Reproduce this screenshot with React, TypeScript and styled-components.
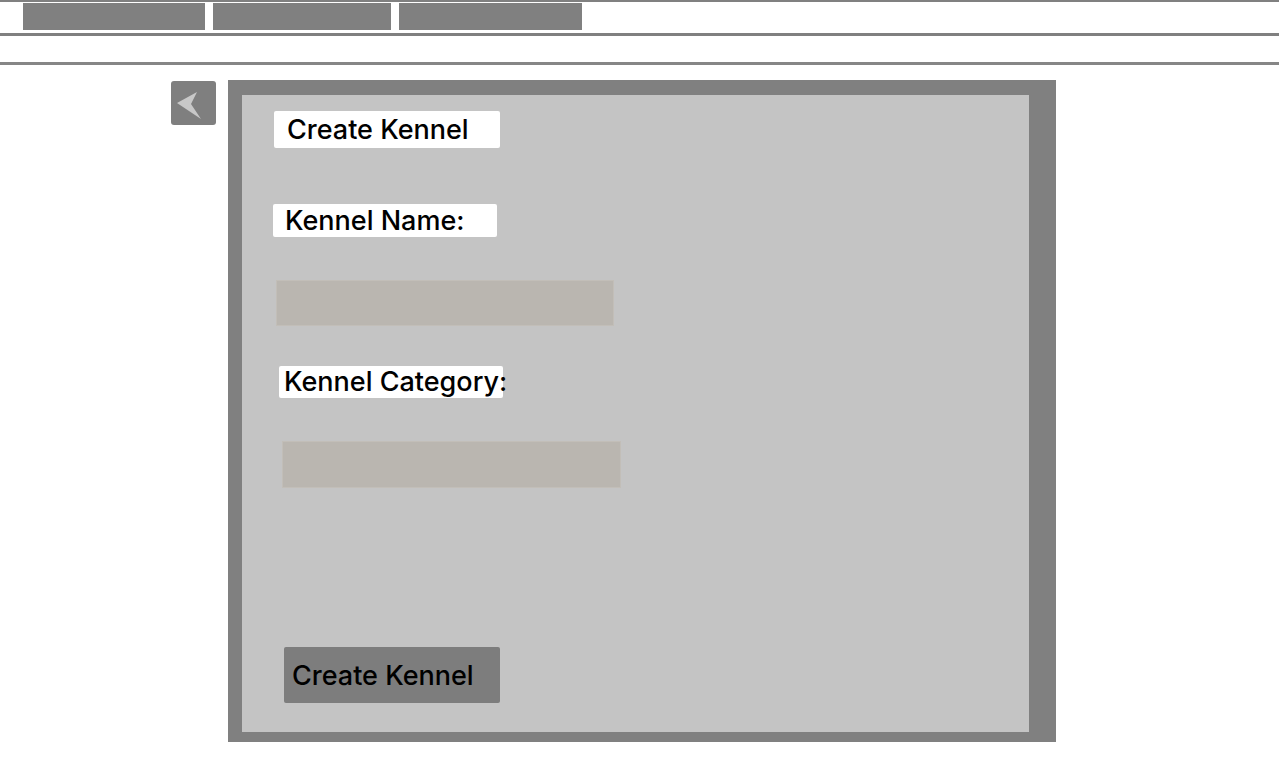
import React from 'react';
import styled, { createGlobalStyle } from 'styled-components';

const GlobalStyle = createGlobalStyle`
  html, body {
    margin: 0;
    padding: 0;
    background: #ffffff;
    font-family: Inter, "Liberation Sans", Arial, sans-serif;
  }
`;

const Header = styled.header`
  border-top: 2px solid #808080;
`;

const Tabs = styled.nav`
  display: flex;
  gap: 8px;
  padding: 1px 0 3px 23px;
  border-bottom: 3px solid #808080;
`;

const Tab = styled.div<{ w: number }>`
  width: ${(p) => p.w}px;
  height: 27px;
  background: #808080;
`;

const SubBar = styled.div`
  height: 26px;
  border-bottom: 3px solid #868686;
`;

const Main = styled.main`
  display: flex;
  align-items: flex-start;
  gap: 12px;
  padding: 15px 0 0 171px;
`;

const BackButton = styled.button`
  width: 45px;
  height: 44px;
  margin-top: 1px;
  border: none;
  border-radius: 3px;
  background: #7f7f7f;
  display: block;
  padding: 0;
  cursor: pointer;
`;

const Panel = styled.section`
  width: 828px;
  height: 662px;
  box-sizing: border-box;
  border-style: solid;
  border-color: #808080;
  border-width: 15px 27px 10px 14px;
  background: #c4c4c4;
  display: flex;
  flex-direction: column;
  align-items: flex-start;
  padding: 16px 0 0 0;
`;

const Label = styled.div<{ x: number; w: number; h: number; top: number; pad: number }>`
  margin-top: ${(p) => p.top}px;
  margin-left: ${(p) => p.x}px;
  width: ${(p) => p.w}px;
  height: ${(p) => p.h}px;
  box-sizing: border-box;
  background: #ffffff;
  border-radius: 2px;
  color: #000;
  font-size: 27px;
  font-weight: 500;
  line-height: ${(p) => p.h}px;
  padding-left: ${(p) => p.pad}px;
  white-space: nowrap;
`;

const Field = styled.input<{ x: number; top: number; w: number; h: number }>`
  margin-top: ${(p) => p.top}px;
  margin-left: ${(p) => p.x}px;
  width: ${(p) => p.w}px;
  height: ${(p) => p.h}px;
  box-sizing: border-box;
  border: 1px solid #c2beb8;
  background: #bab6b0;
  outline: none;
`;

const SubmitButton = styled.button`
  margin-top: 159px;
  margin-left: 42px;
  width: 216px;
  height: 56px;
  border: none;
  border-radius: 2px;
  background: #7d7d7d;
  color: #000;
  font-family: Inter, "Liberation Sans", Arial, sans-serif;
  font-size: 27px;
  font-weight: 500;
  text-align: left;
  padding: 0 0 0 8px;
  cursor: pointer;
`;

export default function App(): JSX.Element {
  return (
    <>
      <GlobalStyle />
      <Header>
        <Tabs>
          <Tab w={182} />
          <Tab w={178} />
          <Tab w={183} />
        </Tabs>
        <SubBar />
      </Header>
      <Main>
        <BackButton aria-label="Back">
          <svg width="45" height="44" viewBox="0 0 45 44">
            <polygon points="26,11 6,22 30,38 20,23" fill="#c8c8c8" />
          </svg>
        </BackButton>
        <Panel>
          <Label x={32} top={0} w={226} h={37} pad={13}>Create Kennel</Label>
          <Label x={31} top={56} w={224} h={33} pad={12}>Kennel Name:</Label>
          <Field x={34} top={43} w={338} h={46} />
          <Label x={37} top={40} w={224} h={32} pad={5}>Kennel Category:</Label>
          <Field x={40} top={43} w={339} h={47} />
          <SubmitButton>Create Kennel</SubmitButton>
        </Panel>
      </Main>
    </>
  );
}
